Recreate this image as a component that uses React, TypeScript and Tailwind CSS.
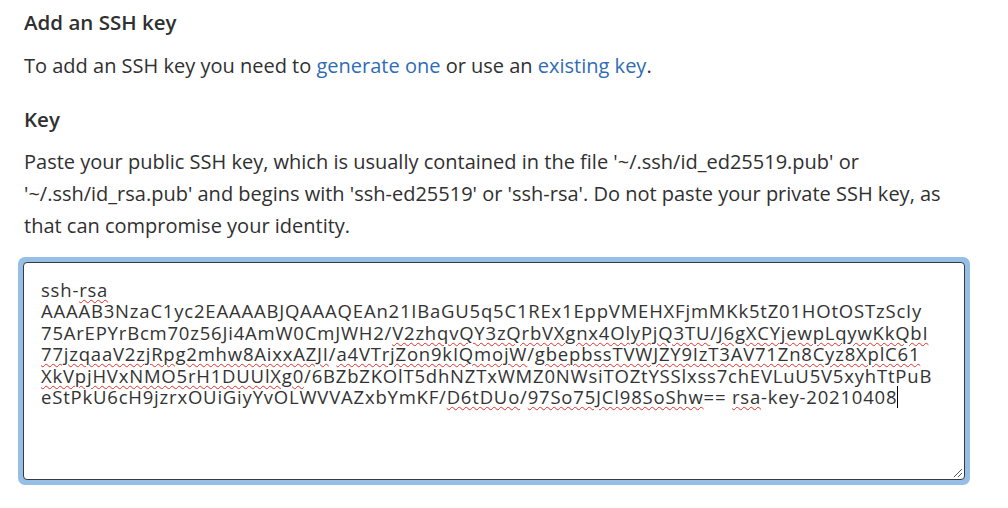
import React from "react";

const font = { fontFamily: '"Open Sans", "Noto Sans", sans-serif' };

function Sq({ children }: { children: React.ReactNode }) {
  return (
    <span className="underline decoration-wavy decoration-[#e0302a] decoration-1 underline-offset-[2px]">
      {children}
    </span>
  );
}

export default function App() {
  return (
    <div className="w-[1008px] h-[508px] bg-white text-[#303030] px-6 pt-[8px]" style={font}>
      <h3 className="text-[20.5px] font-semibold leading-[28px]">Add an SSH key</h3>
      <p className="mt-[14px] text-[20px] leading-[32px]">
        To add an SSH key you need to{" "}
        <a href="#" className="text-[#2f6cb5]">generate one</a> or use an{" "}
        <a href="#" className="text-[#2f6cb5]">existing key</a>.
      </p>

      <label className="block mt-[23px] text-[20.5px] font-semibold leading-[28px]">Key</label>
      <p className="mt-[13px] text-[20px] leading-[32px]">
        Paste your public SSH key, which is usually contained in the file '~/.ssh/id_ed25519.pub' or
        <br />
        '~/.ssh/id_rsa.pub' and begins with 'ssh-ed25519' or 'ssh-rsa'. Do not paste your private SSH key, as
        <br />
        that can compromise your identity.
      </p>

      <div className="mt-[15px] -ml-[6px] w-[952px] rounded-[7px] bg-[#95bfe7] p-[5px]">
        <div className="relative h-[218px] rounded-[4px] border border-[#3a3a3a] bg-white pl-[17px] pt-[16px] text-[18.5px] leading-[21.4px] tracking-[0.8px] text-[#333]">
          <div>
            ssh-<Sq>rsa</Sq>
          </div>
          <div>AAAAB3NzaC1yc2EAAAABJQAAAQEAn21IBaGU5q5C1REx1EppVMEHXFjmMKk5tZ01HOtOSTzScIy</div>
          <div>
            75ArEPYrBcm70z56Ji4AmW0CmJWH2/<Sq>V2zhqvQY3zQrbVXgnx4OlyPjQ3TU</Sq>/<Sq>J6gXCYjewpLqywKkQbI</Sq>
          </div>
          <div>
            <Sq>77jzqaaV2zjRpg2mhw8AixxAZJI</Sq>/<Sq>a4VTrjZon9kIQmojW</Sq>/<Sq>gbepbssTVWJZY9IzT3AV71Zn8Cyz8XplC61</Sq>
          </div>
          <div>
            <Sq>XkVpjHVxNMO5rH1DUUlXg0</Sq>/6BZbZKOlT5dhNZTxWMZ0NWsiTOZtYSSlxss7chEVLuU5V5xyhTtPuB
          </div>
          <div className="flex items-center">
            <span>
              eStPkU6cH9jzrxOUiGiyYvOLWVVAZxbYmKF/<Sq>D6tDUo</Sq>/<Sq>97So75JCl98SoShw</Sq>== <Sq>rsa</Sq>-key-20210408
            </span>
            <span className="inline-block h-[22px] w-px bg-black" />
          </div>
          <svg className="absolute bottom-[1px] right-[1px]" width="11" height="11" viewBox="0 0 11 11">
            <path d="M10 2 L2 10 M10 6 L6 10" stroke="#555" strokeWidth="1" fill="none" />
          </svg>
        </div>
      </div>
    </div>
  );
}
